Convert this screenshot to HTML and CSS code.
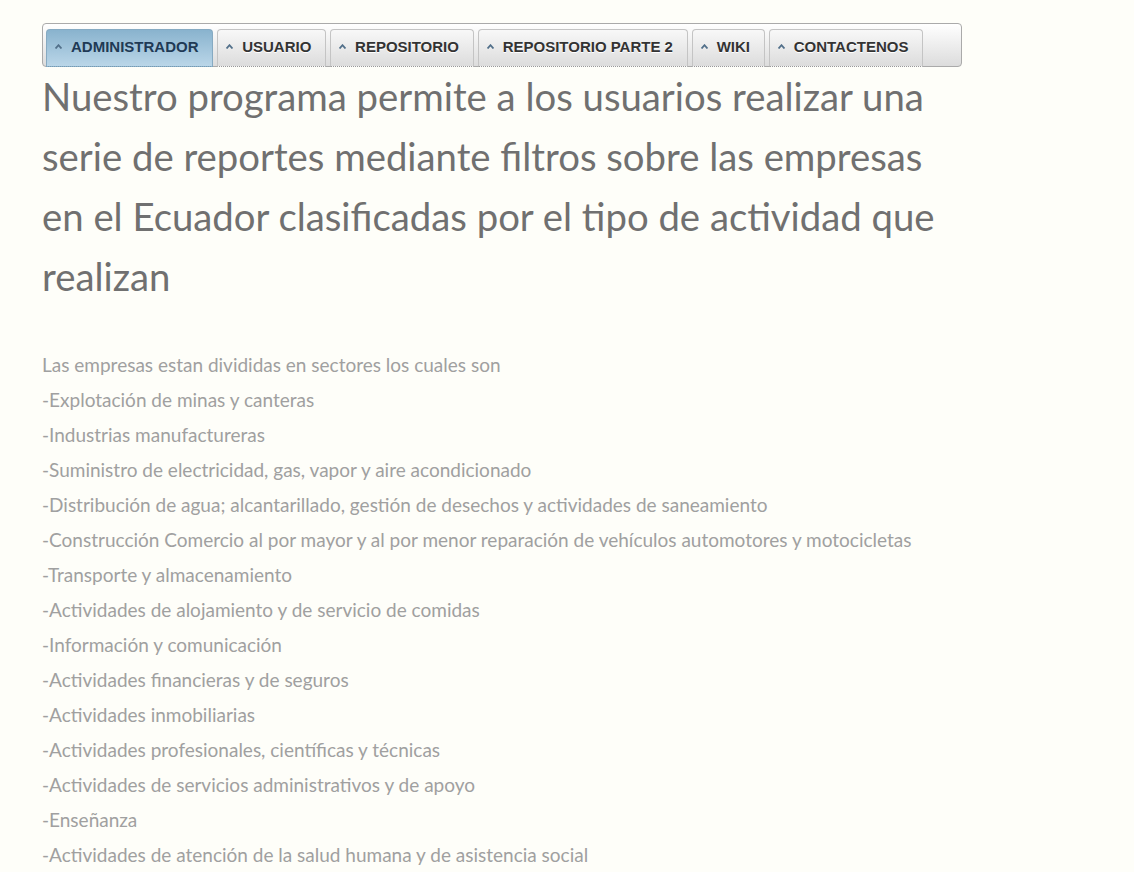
FILE: index.html
```html
<!DOCTYPE html>
<html lang="es">
<head>
<meta charset="utf-8">
<title>Empresas</title>
<link rel="stylesheet" href="styles.css">
</head>
<body>
<div class="page">
  <nav class="menubar">
    <a class="tab active"><svg class="caret" viewBox="0 0 7 5" width="7" height="5"><path d="M0.5 4.5 L3.5 1.2 L6.5 4.5"/></svg><span>ADMINISTRADOR</span></a>
    <a class="tab"><svg class="caret" viewBox="0 0 7 5" width="7" height="5"><path d="M0.5 4.5 L3.5 1.2 L6.5 4.5"/></svg><span>USUARIO</span></a>
    <a class="tab"><svg class="caret" viewBox="0 0 7 5" width="7" height="5"><path d="M0.5 4.5 L3.5 1.2 L6.5 4.5"/></svg><span>REPOSITORIO</span></a>
    <a class="tab"><svg class="caret" viewBox="0 0 7 5" width="7" height="5"><path d="M0.5 4.5 L3.5 1.2 L6.5 4.5"/></svg><span>REPOSITORIO PARTE 2</span></a>
    <a class="tab"><svg class="caret" viewBox="0 0 7 5" width="7" height="5"><path d="M0.5 4.5 L3.5 1.2 L6.5 4.5"/></svg><span>WIKI</span></a>
    <a class="tab"><svg class="caret" viewBox="0 0 7 5" width="7" height="5"><path d="M0.5 4.5 L3.5 1.2 L6.5 4.5"/></svg><span>CONTACTENOS</span></a>
  </nav>
  <h1 class="title">Nuestro programa permite a los usuarios realizar una serie de reportes mediante filtros sobre las empresas en el Ecuador clasificadas por el tipo de actividad que realizan</h1>
  <div class="sectors">
    <p>Las empresas estan divididas en sectores los cuales son</p>
    <p>-Explotación de minas y canteras</p>
    <p>-Industrias manufactureras</p>
    <p>-Suministro de electricidad, gas, vapor y aire acondicionado</p>
    <p>-Distribución de agua; alcantarillado, gestión de desechos y actividades de saneamiento</p>
    <p>-Construcción Comercio al por mayor y al por menor reparación de vehículos automotores y motocicletas</p>
    <p>-Transporte y almacenamiento</p>
    <p>-Actividades de alojamiento y de servicio de comidas</p>
    <p>-Información y comunicación</p>
    <p>-Actividades financieras y de seguros</p>
    <p>-Actividades inmobiliarias</p>
    <p>-Actividades profesionales, científicas y técnicas</p>
    <p>-Actividades de servicios administrativos y de apoyo</p>
    <p>-Enseñanza</p>
    <p>-Actividades de atención de la salud humana y de asistencia social</p>
  </div>
</div>
</body>
</html>
```
FILE: styles.css
```css
html, body {
  margin: 0;
  padding: 0;
  background: #fefef9;
}
body {
  font-family: Lato, "Open Sans", sans-serif;
}
.page {
  padding: 23px 0 0 42px;
  width: 920px;
}
.menubar {
  display: flex;
  gap: 4px;
  box-sizing: border-box;
  width: 920px;
  height: 44px;
  padding: 5px 3px 0 3px;
  border: 1px solid #aaaaaa;
  border-radius: 4px;
  background: linear-gradient(#ffffff, #dcdcdc);
}
.tab {
  display: flex;
  align-items: center;
  gap: 9px;
  box-sizing: border-box;
  height: 38px;
  padding: 0 13.7px 4px 8px;
  border: 1px solid #c4c4c4;
  border-bottom: 1px dotted #999;
  border-radius: 4px 4px 0 0;
  background: linear-gradient(#f8f8f8, #dcdcdc);
  font-family: "Liberation Sans", Arial, sans-serif;
  font-weight: bold;
  font-size: 15px;
  color: #333333;
  text-shadow: 0 1px 0 #ffffff;
  white-space: nowrap;
}
.tab.active {
  border-color: #86aac2;
  border-bottom-color: #7a9ab0;
  background: linear-gradient(#89b3ce, #bad6e8);
  color: #1f3a55;
  text-shadow: none;
}
.caret {
  display: block;
  flex: none;
  fill: none;
  stroke: #52708a;
  stroke-width: 1.8;
  margin-top: 1px;
}
.title {
  margin: -1px 0 0 0;
  max-width: 905px;
  font-weight: normal;
  font-size: 38.3px;
  line-height: 60px;
  color: #707070;
}
.sectors {
  margin-top: 41px;
}
.sectors p {
  margin: 0;
  font-size: 19px;
  line-height: 35px;
  color: #a0a0a0;
}
```
